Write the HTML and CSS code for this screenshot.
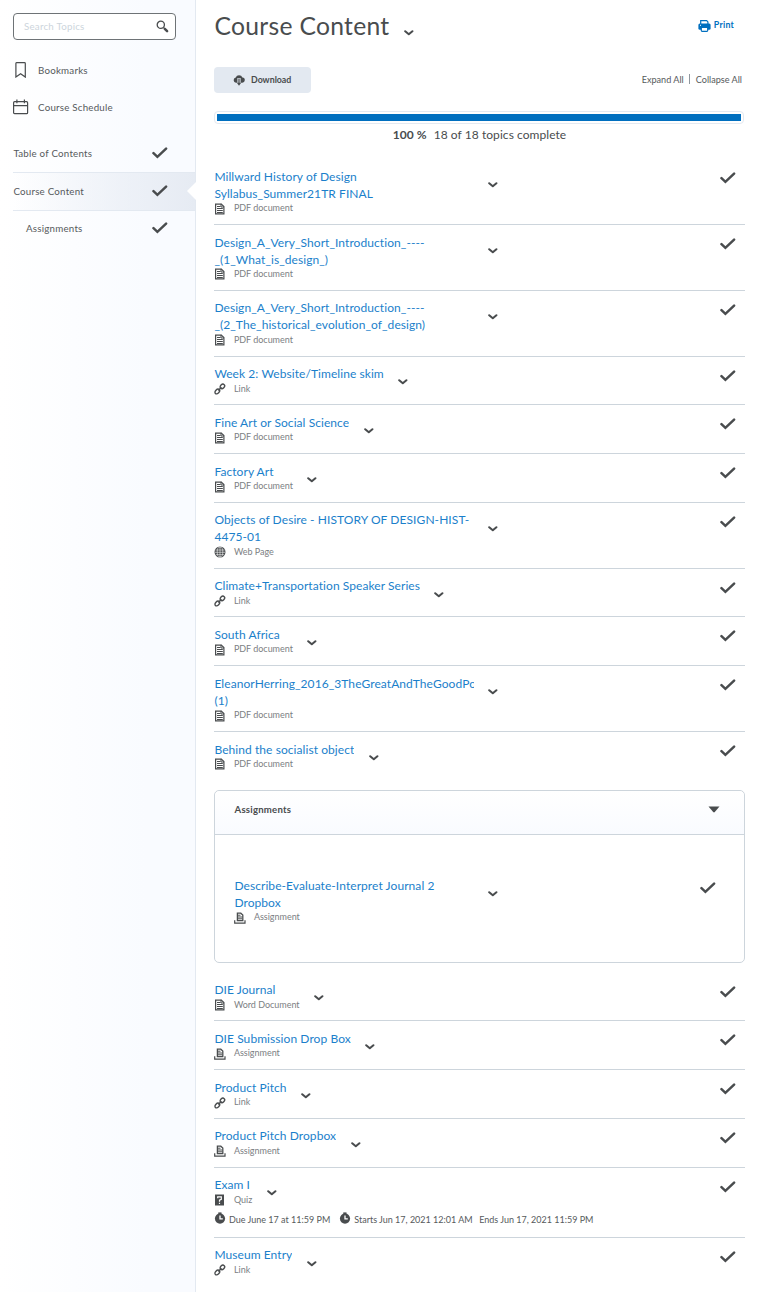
FILE: index.html
```
<!DOCTYPE html>
<html lang="en">
<head>
<meta charset="utf-8">
<title>Course Content</title>
<link rel="stylesheet" href="styles.css">
</head>
<body>
<svg class="defs" aria-hidden="true">
  <symbol id="check" viewBox="0 0 16 12"><path d="M1.5 6.2 5.4 9.800 14.100 1.6" fill="none" stroke="#494c4e" stroke-width="2.500" stroke-linecap="round" stroke-linejoin="miter"/></symbol>
  <symbol id="chev" viewBox="0 0 10 6"><path d="M1.2 1.2 4.800 4.3 8.400 1.2" fill="none" stroke="#494c4e" stroke-width="2" stroke-linecap="round" stroke-linejoin="round"/></symbol>
  <symbol id="doc" viewBox="0 0 12 12"><path d="M1.600 1.100h5.700l2.600 2.500v7.300H1.600z" fill="#fff" stroke="#494c4e" stroke-width="1.200"/><path d="M7 .8v3.200h3M3 3.500h3.500M3 5.500h5.800M3 7.500h5.800M3 9.500h5.800" fill="none" stroke="#494c4e" stroke-width="1"/></symbol>
  <symbol id="link" viewBox="0 0 12 12"><g fill="none" stroke="#494c4e" stroke-width="1.400"><ellipse cx="3.300" cy="8.500" rx="2.700" ry="1.900" transform="rotate(-45 3.300 8.500)"/><ellipse cx="8.400" cy="3.400" rx="2.500" ry="1.900" transform="rotate(-45 8.400 3.400)"/><path d="m4.300 7.500 3.200-3.200"/></g></symbol>
  <symbol id="web" viewBox="0 0 12 12"><circle cx="6" cy="6" r="5.500" fill="#494c4e"/><g fill="none" stroke="#fff" stroke-width=".55"><path d="M6 1v10M1.500 4h9M1 6.300h10M2 8.600h8"/><ellipse cx="6" cy="6" rx="2.800" ry="5"/></g></symbol>
  <symbol id="assign" viewBox="0 0 12 12"><path d="M.7 8.200v3h10.300v-3" fill="none" stroke="#494c4e" stroke-width="1.200"/><path d="M3.400 1.200h3.400L8.800 3v5.600H3.400z" fill="#fff" stroke="#494c4e" stroke-width="1.300"/><path d="M4 3.200h2.500M4 5h4M4 6.800h4" stroke="#494c4e"/></symbol>
  <symbol id="quiz" viewBox="0 0 12 12"><path d="M1 .5h9v11H1z" fill="#494c4e"/><path d="M3.700 4.200V2.900h3.600v2.400L5.500 6.200v1.500M5.500 8.700v1.300" fill="none" stroke="#fff" stroke-width="1.200"/></symbol>
  <symbol id="clock" viewBox="0 0 12 12"><circle cx="6" cy="6.600" r="5.100" fill="#494c4e"/><path d="M4.300.4h3.200v2H4.300z" fill="#494c4e"/><path d="M6 3.500v3.300h2.800" fill="none" stroke="#fff" stroke-width="1.300"/></symbol>
</svg>
<div class="page">
  <aside class="side">
    <div class="search"><span>Search Topics</span>
      <svg width="13" height="13" viewBox="0 0 13 13"><circle cx="4.800" cy="4.800" r="3.600" fill="none" stroke="#494c4e" stroke-width="1.300"/><path d="m7.600 7.600 1 1" stroke="#494c4e" stroke-width="1.200"/><path d="m8.800 8.800 2.300 2.300" stroke="#494c4e" stroke-width="2.500" stroke-linecap="round"/></svg>
    </div>
    <a class="tool"><svg width="16" height="16" viewBox="0 0 16 16"><path d="M3.500.7h8q.8 0 .8.8v13.600L7.600 11.700 2.900 15V1.500q0-.8.600-.8z" fill="none" stroke="#494c4e" stroke-width="1.200"/></svg><span>Bookmarks</span></a>
    <a class="tool schedule"><svg width="16" height="16" viewBox="0 0 16 16"><g fill="none" stroke="#494c4e" stroke-width="1.200"><rect x=".6" y="2.700" width="14" height="12" rx="1"/><path d="M.6 6.600h14M3.900.5v3.800M11.400.5v3.800"/></g></svg><span>Course Schedule</span></a>
    <nav>
      <a class="nav"><span>Table of Contents</span><svg class="check"><use href="#check"/></svg></a>
      <a class="nav current"><span>Course Content</span><svg class="check"><use href="#check"/></svg></a>
      <a class="nav child"><span>Assignments</span><svg class="check"><use href="#check"/></svg></a>
    </nav>
  </aside>
  <main>
    <header class="head">
      <h1>Course Content</h1><svg class="chev"><use href="#chev"/></svg>
      <a class="print"><svg width="13" height="12" viewBox="0 0 13 12"><path d="M2.700 4V.7h6l1.200 1.200V4" fill="#fff" stroke="#006fbf" stroke-width="1.200"/><rect x=".4" y="3.600" width="12.200" height="6.200" rx="1.500" fill="#006fbf"/><rect x="3.300" y="7.400" width="6.400" height="4" rx=".8" fill="#fff" stroke="#006fbf" stroke-width="1.200"/><path d="M2 5.300h1" stroke="#fff"/></svg><span>Print</span></a>
    </header>
    <div class="bar">
      <button class="download"><svg width="12" height="12" viewBox="0 0 12 12"><path d="M3 8.700a2.700 2.700 0 0 1-.3-5.300A3.600 3.600 0 0 1 9.400 3.500 2.600 2.600 0 0 1 9 8.700z" fill="#494c4e"/><path d="M6 4V9" stroke="#e3e9f1" stroke-width="3.200"/><path d="M6 4.500V10" stroke="#494c4e" stroke-width="1.200"/><path d="M3.800 8.800h4.400L6 11.700z" fill="#494c4e"/></svg><span>Download</span></button>
      <div class="toggles"><a>Expand All</a><i></i><a>Collapse All</a></div>
    </div>
    <div class="progress"><div></div></div>
    <p class="done"><b>100 %</b><span>18 of 18 topics complete</span></p>

    <ul class="list">
      <li><div class="text wide"><a>Millward History of Design Syllabus_Summer21TR FINAL</a><small><svg><use href="#doc"/></svg>PDF document</small></div><svg class="chev"><use href="#chev"/></svg><svg class="check"><use href="#check"/></svg></li>
      <li><div class="text wide"><a>Design_A_Very_Short_Introduction_----<br>_(1_What_is_design_)</a><small><svg><use href="#doc"/></svg>PDF document</small></div><svg class="chev"><use href="#chev"/></svg><svg class="check"><use href="#check"/></svg></li>
      <li><div class="text wide"><a>Design_A_Very_Short_Introduction_----<br>_(2_The_historical_evolution_of_design)</a><small><svg><use href="#doc"/></svg>PDF document</small></div><svg class="chev"><use href="#chev"/></svg><svg class="check"><use href="#check"/></svg></li>
      <li><div class="text"><a>Week 2: Website/Timeline skim</a><small><svg><use href="#link"/></svg>Link</small></div><svg class="chev"><use href="#chev"/></svg><svg class="check"><use href="#check"/></svg></li>
      <li><div class="text"><a>Fine Art or Social Science</a><small><svg><use href="#doc"/></svg>PDF document</small></div><svg class="chev"><use href="#chev"/></svg><svg class="check"><use href="#check"/></svg></li>
      <li><div class="text"><a>Factory Art</a><small><svg><use href="#doc"/></svg>PDF document</small></div><svg class="chev"><use href="#chev"/></svg><svg class="check"><use href="#check"/></svg></li>
      <li><div class="text wide"><a>Objects of Desire - HISTORY OF DESIGN-HIST-<br>4475-01</a><small><svg><use href="#web"/></svg>Web Page</small></div><svg class="chev"><use href="#chev"/></svg><svg class="check"><use href="#check"/></svg></li>
      <li><div class="text"><a>Climate+Transportation Speaker Series</a><small><svg><use href="#link"/></svg>Link</small></div><svg class="chev"><use href="#chev"/></svg><svg class="check"><use href="#check"/></svg></li>
      <li><div class="text"><a>South Africa</a><small><svg><use href="#doc"/></svg>PDF document</small></div><svg class="chev"><use href="#chev"/></svg><svg class="check"><use href="#check"/></svg></li>
      <li><div class="text wide"><a>EleanorHerring_2016_3TheGreatAndTheGoodPo (1)</a><small><svg><use href="#doc"/></svg>PDF document</small></div><svg class="chev"><use href="#chev"/></svg><svg class="check"><use href="#check"/></svg></li>
      <li><div class="text"><a>Behind the socialist object</a><small><svg><use href="#doc"/></svg>PDF document</small></div><svg class="chev"><use href="#chev"/></svg><svg class="check"><use href="#check"/></svg></li>
    </ul>

    <section class="module">
      <h2><span>Assignments</span><svg width="12" height="7" viewBox="0 0 12 7"><path d="M.5.500h11L6.800 6q-.8.800-1.600 0z" fill="#494c4e"/></svg></h2>
      <ul class="list">
        <li><div class="text wide"><a>Describe-Evaluate-Interpret Journal 2 Dropbox</a><small><svg><use href="#assign"/></svg>Assignment</small></div><svg class="chev"><use href="#chev"/></svg><svg class="check"><use href="#check"/></svg></li>
      </ul>
    </section>

    <ul class="list">
      <li><div class="text"><a>DIE Journal</a><small><svg><use href="#doc"/></svg>Word Document</small></div><svg class="chev"><use href="#chev"/></svg><svg class="check"><use href="#check"/></svg></li>
      <li><div class="text"><a>DIE Submission Drop Box</a><small><svg><use href="#assign"/></svg>Assignment</small></div><svg class="chev"><use href="#chev"/></svg><svg class="check"><use href="#check"/></svg></li>
      <li><div class="text"><a>Product Pitch</a><small><svg><use href="#link"/></svg>Link</small></div><svg class="chev"><use href="#chev"/></svg><svg class="check"><use href="#check"/></svg></li>
      <li><div class="text"><a>Product Pitch Dropbox</a><small><svg><use href="#assign"/></svg>Assignment</small></div><svg class="chev"><use href="#chev"/></svg><svg class="check"><use href="#check"/></svg></li>
      <li class="dated"><div class="text"><a>Exam I</a><small><svg><use href="#quiz"/></svg>Quiz</small></div><svg class="chev"><use href="#chev"/></svg><svg class="check"><use href="#check"/></svg>
        <div class="dates"><svg><use href="#clock"/></svg><span class="due">Due June 17 at 11:59 PM</span><svg><use href="#clock"/></svg><span class="starts">Starts Jun 17, 2021 12:01 AM</span><span>Ends Jun 17, 2021 11:59 PM</span></div></li>
      <li><div class="text"><a>Museum Entry</a><small><svg><use href="#link"/></svg>Link</small></div><svg class="chev"><use href="#chev"/></svg><svg class="check"><use href="#check"/></svg></li>
    </ul>
  </main>
</div>
</body>
</html>
```
FILE: styles.css
```
* { box-sizing: border-box; }
body { margin: 0; background: #fff; color: #565a5c; font-family: Lato, sans-serif; font-size: 9.75px; letter-spacing: .22px; }
.defs { position: absolute; width: 0; height: 0; }
svg { display: block; flex: none; }
ul, p, h1, h2 { margin: 0; padding: 0; list-style: none; }
.page { display: flex; height: 1292px; overflow: hidden; }

.side { width: 196px; flex: none; border-right: 1px solid #e3e9f1; background: linear-gradient(90deg, #fff, #f9fbff 75%); padding-top: 13px; }
.search { display: flex; align-items: center; justify-content: space-between; width: 163px; height: 27px; margin-left: 13px; padding: 0 6px 0 10px; border: 1px solid #6e7376; border-radius: 4px; background: #fff; color: #cdd5dc; }
.search span { padding-bottom: 2px; }
.tool { display: flex; align-items: center; gap: 9px; height: 16px; margin: 22px 0 0 13px; }
.tool.schedule { margin-top: 21px; }
nav { margin-top: 19px; }
.nav { display: flex; align-items: center; justify-content: space-between; height: 38px; margin-left: 13px; padding-right: 27px; position: relative; }
.nav span { padding-left: .4px; }
.nav.current { height: 39px; padding-bottom: 2px; border-top: 1px solid #e3e9f1; border-bottom: 1px solid #e3e9f1; background: linear-gradient(90deg, rgba(227,233,241,0), #e6ebf3); }
.nav.current::after { content: ""; position: absolute; right: -1px; top: 9px; border: 9px solid transparent; border-right-color: #fff; border-left: 0; }
.nav.child { height: 34px; padding-left: 12.600px; }
.check { width: 16px; height: 12px; }
.chev { width: 10px; height: 6px; }

main { width: 549px; flex: none; padding-left: 18px; }
.head { display: flex; height: 53px; }
h1 { padding-left: .5px; font-size: 24.7px; font-weight: 400; line-height: 52px; letter-spacing: .28px; color: #494c4e; }
.head .chev { margin: 30px 0 0 14px; }
.print { display: flex; gap: 3px; height: 12px; margin: 20px 11px 0 auto; color: #006fbf; font-weight: 700; line-height: 10px; font-size: 8.8px; }
.bar { display: flex; justify-content: space-between; align-items: center; height: 26px; margin-top: 14px; }
.download { display: flex; align-items: center; gap: 6px; width: 97px; height: 26px; padding: 0 0 2px 19px; border: 0; border-radius: 4px; background: #e3e9f1; color: #494c4e; font: 700 8.8px Lato, sans-serif; }
.download svg { position: relative; top: 1px; }
.toggles { display: flex; align-items: center; height: 24px; margin: 0 3px 2px 0; font-size: 9.1px; letter-spacing: 0; }
.toggles i { width: 1px; height: 10px; margin: 0 6px 0 5px; background: #8f979e; }
.progress { width: 530px; height: 13px; margin-top: 18px; padding: 2px; border: 1px solid #e3e9f1; border-radius: 4px; }
.progress div { height: 7px; background: #006fbf; }
.done { display: flex; justify-content: center; gap: 7px; height: 35.300px; line-height: 22px; font-size: 12px; letter-spacing: .06px; color: #494c4e; }

.list li { display: flex; flex-wrap: wrap; align-items: flex-start; align-content: flex-start; height: 48.750px; padding: 9.500px 9px 0 .4px; border-bottom: 1px solid #cdd5dc; }
.list li:has(.wide) { height: 65.800px; }
.list li:last-child { border-bottom: 0; }
.text { color: #7c8083; }
.text a { display: block; overflow: hidden; line-height: 16.9px; font-size: 12px; letter-spacing: .07px; color: #1b7fcb; }
.text.wide { width: 259.200px; }
.text small { display: flex; align-items: center; height: 10px; font-size: 9px; letter-spacing: -.02px; white-space: nowrap; }
.text small svg { width: 12px; height: 12px; margin-right: 7.500px; position: relative; top: 1px; left: -.4px; }
.list .chev { margin: 13.300px 0 0 14.400px; }
.list .check { margin: 3.500px 0 0 auto; }
.list li.dated { height: 70.200px; }
.dates { display: flex; align-items: center; width: 100%; height: 12px; margin: 9px 0 0 -.4px; font-size: 9px; letter-spacing: 0; }
.dates svg { width: 12px; height: 12px; margin-right: 3px; position: relative; top: -1px; }
.dates .due { margin-right: 9px; }
.dates .starts { margin-right: 6.500px; }

.module { height: 173px; margin: 9.400px 0 9.500px; border: 1px solid #cdd5dc; border-radius: 5px; }
.module h2 { display: flex; align-items: center; justify-content: space-between; height: 44px; padding: 0 24px 6px 19.500px; border-bottom: 1px solid #cdd5dc; border-radius: 5px 5px 0 0; background: linear-gradient(#fff, #f9fbff); font-size: 9.6px; color: #494c4e; }
.module .list { padding: 33.500px 19px 0; }
.module .text.wide { width: 239.500px; }
```
